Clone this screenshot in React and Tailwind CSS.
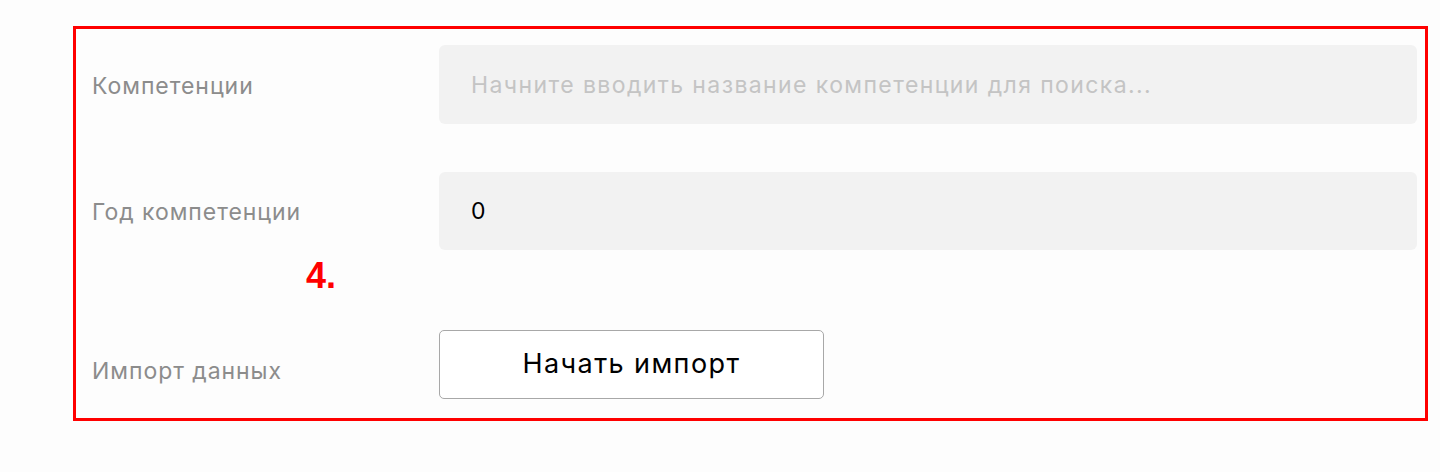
import React, { useState } from "react";

const font = { fontFamily: "Inter, 'Liberation Sans', sans-serif" };

function Row({ label, children, className = "" }) {
    return (
        <div className={"flex items-center " + className}>
            <div className="w-[363px] shrink-0 pl-[16px] pt-[3px] text-[23px] tracking-[0.95px] text-[#8c8c8c]">{label}</div>
            <div className="flex-1">{children}</div>
        </div>
    );
}

export default function App() {
    const [query, setQuery] = useState("");
    const [year, setYear] = useState("0");

    return (
        <div className="w-[1440px] h-[472px] bg-[#fdfdfd] pt-[26px] pl-[73px]" style={font}>
            <div className="w-[1355px] h-[395px] border-[3px] border-[#ff0000] pt-[16px] pr-[8px]">
                <Row label="Компетенции">
                    <input
                        value={query}
                        onChange={(e) => setQuery(e.target.value)}
                        placeholder="Начните вводить название компетенции для поиска..."
                        className="w-full h-[79px] rounded-[6px] bg-[#f2f2f2] px-[32px] text-[23px] tracking-[1.4px] text-black placeholder:text-[#c4c4c4] outline-none"
                    />
                </Row>
                <Row label="Год компетенции" className="mt-[48px]">
                    <input
                        value={year}
                        onChange={(e) => setYear(e.target.value)}
                        className="w-full h-[78px] rounded-[6px] bg-[#f2f2f2] px-[32px] text-[23px] text-black outline-none"
                    />
                </Row>
                {/* annotation */}
                <div className="h-[80px] pl-[230px] pt-[6px]">
                    <span className="text-[36px] font-bold leading-[40px] text-[#ff0000]" style={{ fontFamily: "'Liberation Sans', Arial, sans-serif" }}>4.</span>
                </div>
                <Row label={<span className="relative top-[5px]">Импорт данных</span>}>
                    <button className="w-[385px] h-[69px] rounded-[5px] border border-[#a8a8a8] bg-white text-[27px] tracking-[1.4px] text-black">
                        Начать импорт
                    </button>
                </Row>
            </div>
        </div>
    );
}
